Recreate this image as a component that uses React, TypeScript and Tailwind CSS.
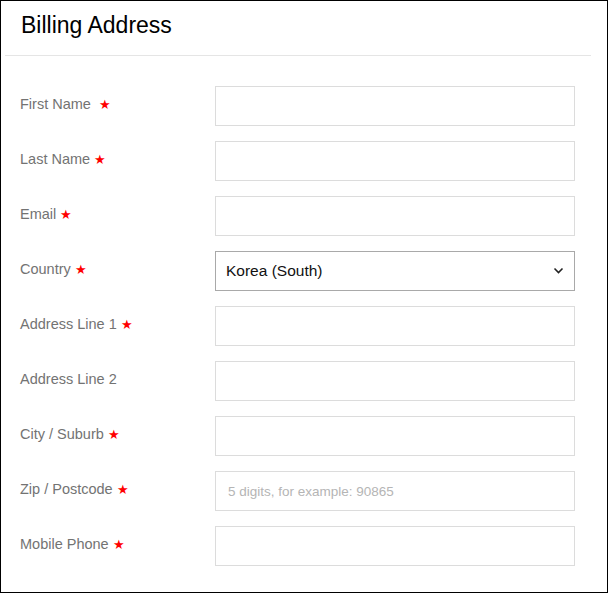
const fields = [
  { label: "First Name", req: true, extraSpace: true },
  { label: "Last Name", req: true },
  { label: "Email", req: true },
  { label: "Country", req: true, select: true },
  { label: "Address Line 1", req: true },
  { label: "Address Line 2", req: false },
  { label: "City / Suburb", req: true },
  { label: "Zip / Postcode", req: true, placeholder: "5 digits, for example: 90865" },
  { label: "Mobile Phone", req: true },
]

export default function App() {
  return (
    <div className="w-[608px] h-[593px] border border-black bg-white font-['Liberation_Sans',Arial,sans-serif] overflow-hidden">
      <div className="ml-[4px] mr-[16px] h-[55px] border-b border-[#e5e5e5] pl-[16px] pt-[11px]">
        <h1 className="text-[23px] leading-[26px] text-black">Billing Address</h1>
      </div>
      <div className="pl-[19px] pt-[30px] flex flex-col gap-[15px]">
        {fields.map((f) => (
          <div key={f.label} className="flex">
            <label className="w-[195px] pt-[8px] text-[14.5px] leading-5 text-[#737373]">
              {f.label}
              {f.req && (
                <span className={`text-[#ff0000] text-[13px] ${f.extraSpace ? "ml-[8px]" : "ml-[4px]"}`}>★</span>
              )}
            </label>
            {f.select ? (
              <div className="relative w-[360px] h-[40px] border border-[#a9a9a9] flex items-center pl-[10px]">
                <span className="text-[15.5px] text-[#111]">Korea (South)</span>
                <svg className="absolute right-[10px] top-[15px]" width="11" height="8" viewBox="0 0 11 8">
                  <path d="M1.5 1.5 L5.5 5.5 L9.5 1.5" stroke="#222" strokeWidth="1.6" fill="none" />
                </svg>
              </div>
            ) : (
              <input
                className="w-[360px] h-[40px] border border-[#dcdcdc] px-[12px] text-[13.5px] outline-none placeholder:text-[#b5b5b5]"
                placeholder={f.placeholder}
              />
            )}
          </div>
        ))}
      </div>
    </div>
  )
}
